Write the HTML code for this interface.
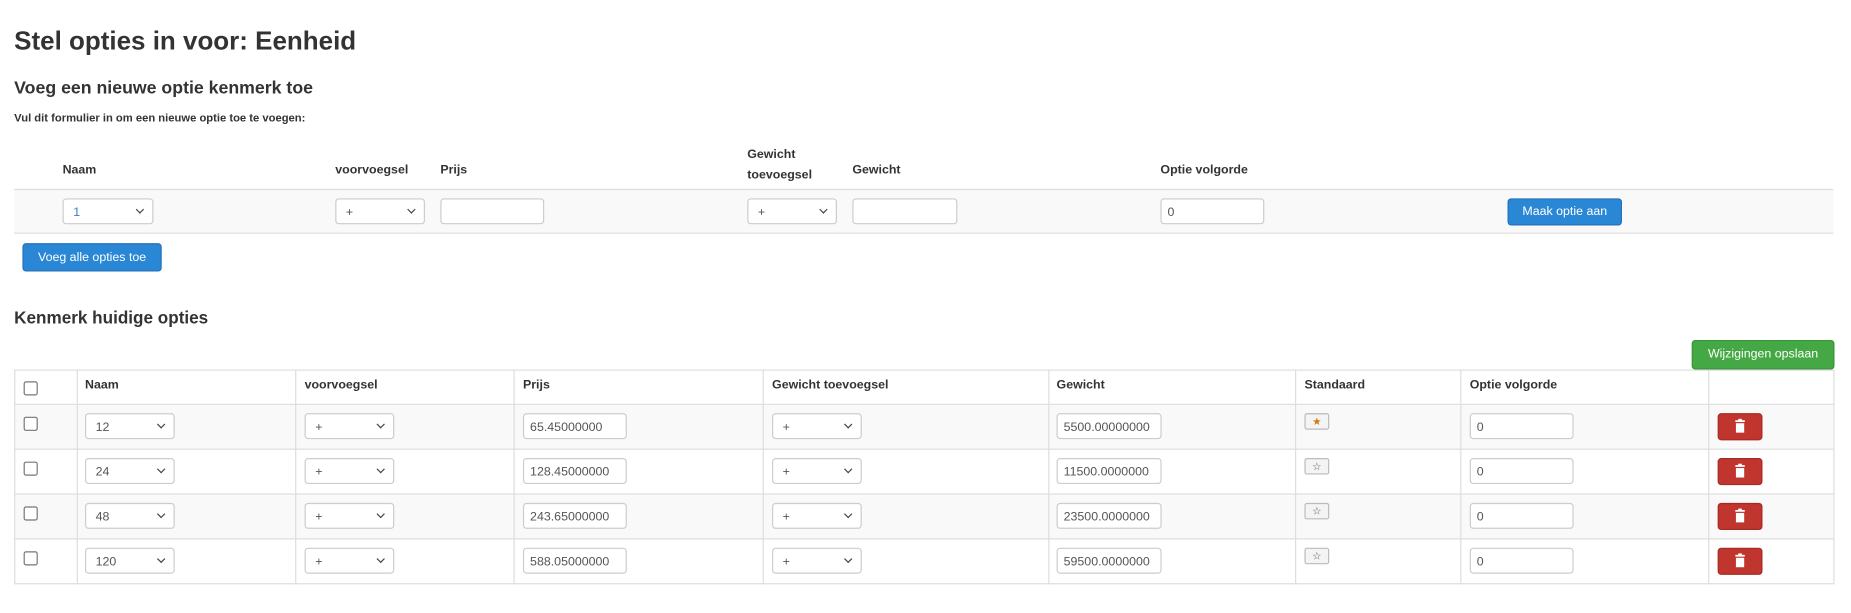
<!DOCTYPE html>
<html><head><meta charset="utf-8">
<style>
html,body{margin:0;padding:0;background:#fff;width:1851px;height:613px;overflow:hidden}
#w{position:absolute;left:0;top:0;width:1568px;height:519px;transform:scale(1.1805);transform-origin:0 0;font-family:"Liberation Sans",Arial,sans-serif;color:#333}
.a{position:absolute}
.h1{font-size:22px;font-weight:bold;left:12px;top:22px}
.h2{font-size:15px;font-weight:bold;left:12px;top:66px}
.sm{font-size:9.5px;font-weight:bold;left:12px;top:95px}
.h3{font-size:14.5px;font-weight:bold;left:12px;top:262px}
.th{font-size:10.5px;font-weight:bold;line-height:17px}
.sel,.inp{position:absolute;height:22px;border:1px solid #ccc;border-radius:3px;background:#fff;box-sizing:border-box;font-size:10.5px;color:#555;line-height:22px;padding-left:8px}
.sel:after{content:"";position:absolute;right:8px;top:6px;width:4px;height:4px;border-right:1.6px solid #444;border-bottom:1.6px solid #444;transform:rotate(45deg)}
.btn{position:absolute;color:#fff;font-size:10.5px;text-align:center;border-radius:3px;box-sizing:border-box}
.blue{background:#2a87d6;border:1px solid #2472b8}
.line{position:absolute;background:#ddd}
.cb{position:absolute;width:10px;height:10px;border:1px solid #767676;border-radius:2px;background:#fff}
.star{position:absolute;width:21px;height:14px;border:1px solid #bbb;border-radius:2px;background:#f4f4f4;box-sizing:border-box;font-size:9px;text-align:center;line-height:12px;color:#555}
.del{position:absolute;width:38px;height:23px;background:#c0352e;border:1px solid #a82a24;border-radius:3px;box-sizing:border-box}
</style></head><body><div id="w">
<div class="a h1">Stel opties in voor: Eenheid</div>
<div class="a h2">Voeg een nieuwe optie kenmerk toe</div>
<div class="a sm">Vul dit formulier in om een nieuwe optie toe te voegen:</div>

<div class="a th" style="left:53px;top:136px">Naam</div>
<div class="a th" style="left:284px;top:136px">voorvoegsel</div>
<div class="a th" style="left:373px;top:136px">Prijs</div>
<div class="a th" style="left:633px;top:123px">Gewicht<br>toevoegsel</div>
<div class="a th" style="left:722px;top:136px">Gewicht</div>
<div class="a th" style="left:983px;top:136px">Optie volgorde</div>
<div class="a" style="left:12px;top:160px;width:1541px;height:38px;background:#f9f9f9;border-top:1px solid #ddd;border-bottom:1px solid #ddd;box-sizing:border-box"></div>
<div class="sel" style="left:53px;top:168px;width:77px;color:#3a7bd5">1</div>
<div class="sel" style="left:284px;top:168px;width:76px">+</div>
<div class="inp" style="left:373px;top:168px;width:88px"></div>
<div class="sel" style="left:633px;top:168px;width:76px">+</div>
<div class="inp" style="left:722px;top:168px;width:89px"></div>
<div class="inp" style="left:983px;top:168px;width:88px;padding-left:5px">0</div>
<div class="btn blue" style="left:1277px;top:168px;width:97px;height:23px;line-height:21px">Maak optie aan</div>
<div class="btn blue" style="left:19px;top:206px;width:118px;height:24px;line-height:22px">Voeg alle opties toe</div>

<div class="a h3">Kenmerk huidige opties</div>
<div class="btn" style="left:1433px;top:288px;width:121px;height:25px;line-height:22px;background:#44a844;border:1px solid #3a923a">Wijzigingen opslaan</div>

<div class="a" style="left:12px;top:313px;width:1542px;height:182px;border:1px solid #ddd;box-sizing:border-box"></div>
<div class="a" style="left:13px;top:343px;width:1540px;height:38px;background:#f9f9f9"></div>
<div class="a" style="left:13px;top:419px;width:1540px;height:38px;background:#f9f9f9"></div>
<div class="line" style="left:12px;top:342px;width:1542px;height:1px"></div>
<div class="line" style="left:12px;top:380px;width:1542px;height:1px"></div>
<div class="line" style="left:12px;top:418px;width:1542px;height:1px"></div>
<div class="line" style="left:12px;top:456px;width:1542px;height:1px"></div>
<div class="line" style="left:65px;top:313px;width:1px;height:182px"></div>
<div class="line" style="left:250px;top:313px;width:1px;height:182px"></div>
<div class="line" style="left:435px;top:313px;width:1px;height:182px"></div>
<div class="line" style="left:646px;top:313px;width:1px;height:182px"></div>
<div class="line" style="left:888px;top:313px;width:1px;height:182px"></div>
<div class="line" style="left:1097px;top:313px;width:1px;height:182px"></div>
<div class="line" style="left:1237px;top:313px;width:1px;height:182px"></div>
<div class="line" style="left:1447px;top:313px;width:1px;height:182px"></div>

<div class="cb" style="left:20px;top:323px"></div>
<div class="a th" style="left:72px;top:318px">Naam</div>
<div class="a th" style="left:258px;top:318px">voorvoegsel</div>
<div class="a th" style="left:443px;top:318px">Prijs</div>
<div class="a th" style="left:654px;top:318px">Gewicht toevoegsel</div>
<div class="a th" style="left:895px;top:318px">Gewicht</div>
<div class="a th" style="left:1105px;top:318px">Standaard</div>
<div class="a th" style="left:1245px;top:318px">Optie volgorde</div>

<!-- rows -->
<div class="cb" style="left:20px;top:353px"></div>
<div class="sel" style="left:72px;top:350px;width:76px">12</div>
<div class="sel" style="left:258px;top:350px;width:76px">+</div>
<div class="inp" style="left:443px;top:350px;width:88px;padding-left:5px">65.45000000</div>
<div class="sel" style="left:654px;top:350px;width:76px">+</div>
<div class="inp" style="left:895px;top:350px;width:89px;padding-left:5px">5500.00000000</div>
<div class="star" style="left:1105px;top:350px;color:#d07a10">★</div>
<div class="inp" style="left:1245px;top:350px;width:88px;padding-left:5px">0</div>
<div class="del" style="left:1455px;top:350px"><svg width="36" height="21" viewBox="0 0 36 21"><rect x="14" y="5" width="8" height="1.5" fill="#fff"/><rect x="16.5" y="3.8" width="3" height="1.5" fill="#fff"/><rect x="14.5" y="7.5" width="7" height="8" fill="#fff"/></svg></div>

<div class="cb" style="left:20px;top:391px"></div>
<div class="sel" style="left:72px;top:388px;width:76px">24</div>
<div class="sel" style="left:258px;top:388px;width:76px">+</div>
<div class="inp" style="left:443px;top:388px;width:88px;padding-left:5px">128.45000000</div>
<div class="sel" style="left:654px;top:388px;width:76px">+</div>
<div class="inp" style="left:895px;top:388px;width:89px;padding-left:5px">11500.0000000</div>
<div class="star" style="left:1105px;top:388px">☆</div>
<div class="inp" style="left:1245px;top:388px;width:88px;padding-left:5px">0</div>
<div class="del" style="left:1455px;top:388px"><svg width="36" height="21" viewBox="0 0 36 21"><rect x="14" y="5" width="8" height="1.5" fill="#fff"/><rect x="16.5" y="3.8" width="3" height="1.5" fill="#fff"/><rect x="14.5" y="7.5" width="7" height="8" fill="#fff"/></svg></div>

<div class="cb" style="left:20px;top:429px"></div>
<div class="sel" style="left:72px;top:426px;width:76px">48</div>
<div class="sel" style="left:258px;top:426px;width:76px">+</div>
<div class="inp" style="left:443px;top:426px;width:88px;padding-left:5px">243.65000000</div>
<div class="sel" style="left:654px;top:426px;width:76px">+</div>
<div class="inp" style="left:895px;top:426px;width:89px;padding-left:5px">23500.0000000</div>
<div class="star" style="left:1105px;top:426px">☆</div>
<div class="inp" style="left:1245px;top:426px;width:88px;padding-left:5px">0</div>
<div class="del" style="left:1455px;top:426px"><svg width="36" height="21" viewBox="0 0 36 21"><rect x="14" y="5" width="8" height="1.5" fill="#fff"/><rect x="16.5" y="3.8" width="3" height="1.5" fill="#fff"/><rect x="14.5" y="7.5" width="7" height="8" fill="#fff"/></svg></div>

<div class="cb" style="left:20px;top:467px"></div>
<div class="sel" style="left:72px;top:464px;width:76px">120</div>
<div class="sel" style="left:258px;top:464px;width:76px">+</div>
<div class="inp" style="left:443px;top:464px;width:88px;padding-left:5px">588.05000000</div>
<div class="sel" style="left:654px;top:464px;width:76px">+</div>
<div class="inp" style="left:895px;top:464px;width:89px;padding-left:5px">59500.0000000</div>
<div class="star" style="left:1105px;top:464px">☆</div>
<div class="inp" style="left:1245px;top:464px;width:88px;padding-left:5px">0</div>
<div class="del" style="left:1455px;top:464px"><svg width="36" height="21" viewBox="0 0 36 21"><rect x="14" y="5" width="8" height="1.5" fill="#fff"/><rect x="16.5" y="3.8" width="3" height="1.5" fill="#fff"/><rect x="14.5" y="7.5" width="7" height="8" fill="#fff"/></svg></div>
</div></body></html>
